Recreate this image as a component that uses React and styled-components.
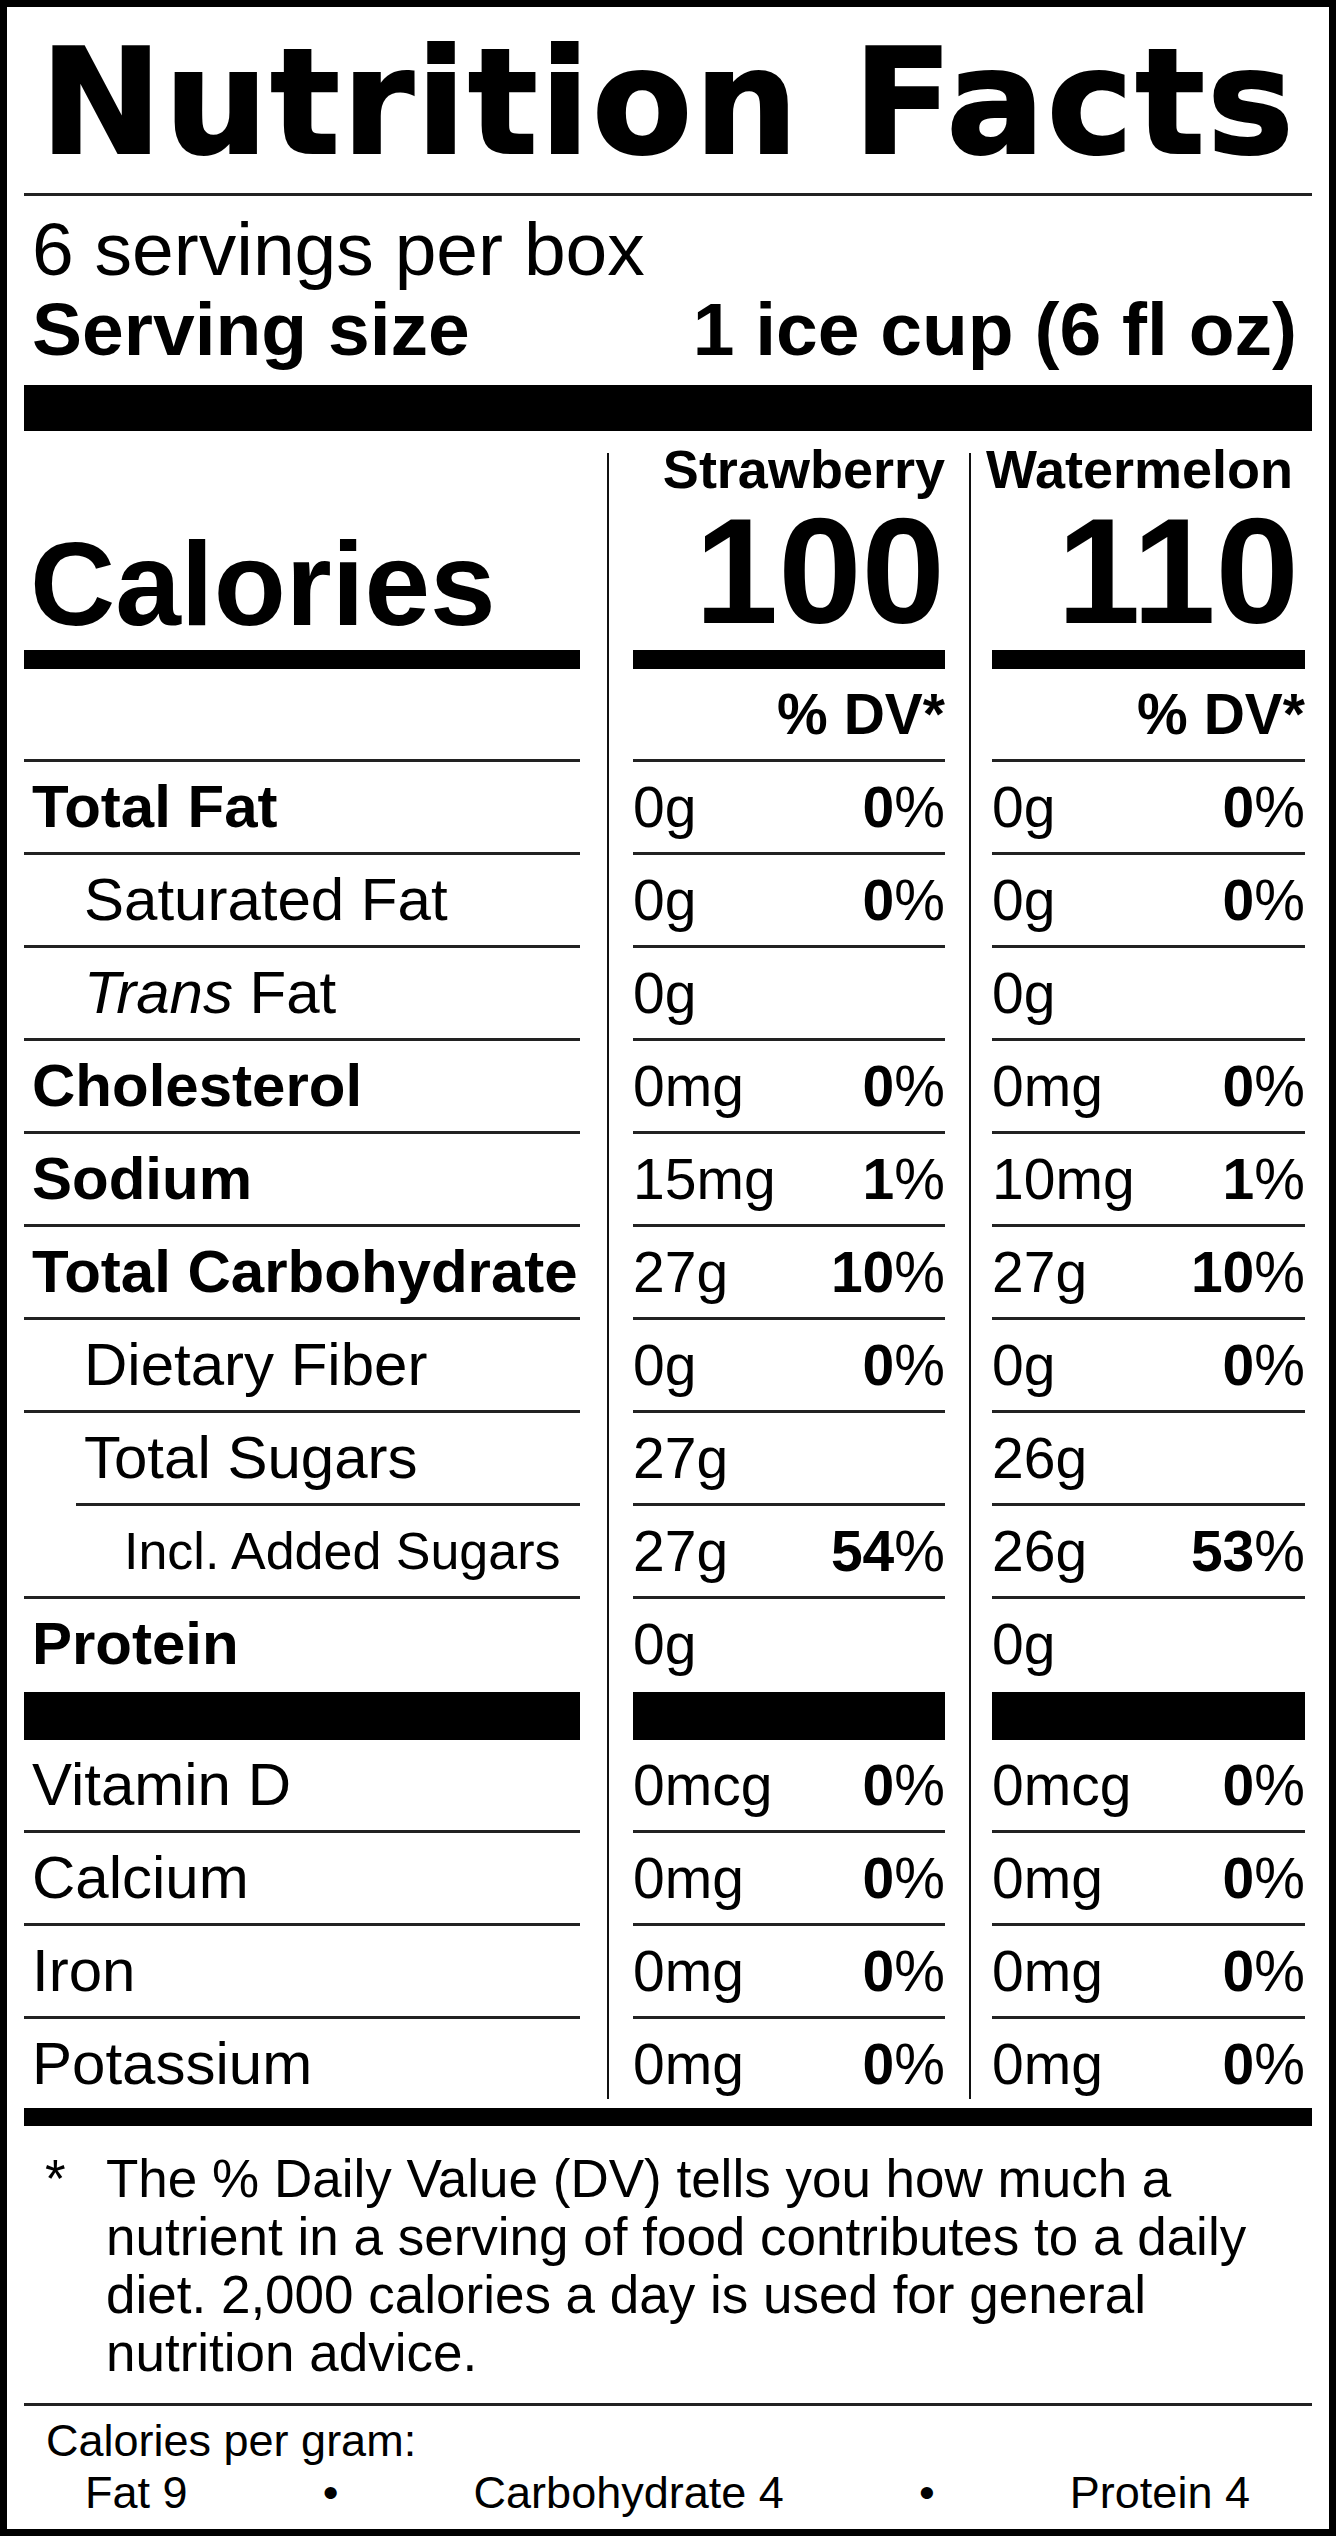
import React, { Fragment } from 'react';
import styled, { createGlobalStyle } from 'styled-components';

const GlobalStyle = createGlobalStyle`
  html, body {
    margin: 0;
    padding: 0;
    background: #fff;
  }
  body {
    font-family: "Liberation Sans", Arial, sans-serif;
    color: #000;
  }
`;

const Label = styled.div`
  box-sizing: border-box;
  width: 1336px;
  height: 2536px;
  border: 7px solid #000;
  padding: 0 17px;
  display: flex;
  flex-direction: column;
  background: #fff;
`;

const Title = styled.h1`
  margin: 0;
  height: 186px;
  line-height: 190px;
  font-family: "DejaVu Sans", "Liberation Sans", sans-serif;
  font-weight: 700;
  font-size: 146px;
  letter-spacing: 2px;
  -webkit-text-stroke: 2px #000;
  text-align: center;
  white-space: nowrap;
`;

const Bar = styled.div`
  flex: none;
  height: ${(p) => p.$h || 3}px;
  margin-top: ${(p) => p.$mt || 0}px;
  margin-left: ${(p) => p.$inset || 0}px;
  background: ${(p) => (p.$thin ? '#222' : '#000')};
`;

const Serving = styled.div`
  padding: 13px 15px 0 8px;
  font-size: 75px;
  line-height: 80px;
  white-space: nowrap;
`;

const ServingSize = styled.div`
  display: flex;
  justify-content: space-between;
  font-weight: 700;
`;

const Columns = styled.div`
  display: flex;
  align-items: stretch;
`;

const Column = styled.div`
  flex: none;
  width: ${(p) => p.$w}px;
  display: flex;
  flex-direction: column;
`;

const Divider = styled.div`
  flex: none;
  width: 2px;
  margin: 22px ${(p) => p.$right}px 0 ${(p) => p.$left}px;
  background: #111;
`;

const Header = styled.div`
  box-sizing: border-box;
  height: 212px;
  padding-top: 8px;
  display: flex;
  flex-direction: column;
  justify-content: flex-end;
  align-items: ${(p) => (p.$left ? 'flex-start' : 'flex-end')};
  font-weight: 700;
  white-space: nowrap;
`;

const ProductName = styled.div`
  font-size: 54px;
  line-height: 60px;
  margin-right: ${(p) => p.$pad || 0}px;
`;

const CalorieCount = styled.div`
  font-size: 150px;
  line-height: 144px;
  margin-right: ${(p) => p.$pad || 0}px;
`;

const CaloriesWord = styled.div`
  font-size: 118px;
  line-height: 118px;
  padding-left: 6px;
`;

const Cell = styled.div`
  flex: none;
  height: ${(p) => p.$h || 90}px;
  line-height: 90px;
  display: flex;
  justify-content: ${(p) => (p.$end ? 'flex-end' : 'space-between')};
  white-space: nowrap;
`;

const NameText = styled.span`
  font-size: ${(p) => (p.$indent === 2 ? 52 : 60)}px;
  font-weight: ${(p) => (p.$bold ? 700 : 400)};
  padding-left: ${(p) => [8, 60, 100][p.$indent || 0]}px;
`;

const ValueText = styled.span`
  font-size: 57px;
  font-weight: ${(p) => (p.$bold ? 700 : 400)};
`;

const Footnote = styled.div`
  display: flex;
  padding-top: 24px;
  font-size: 53px;
  line-height: 58px;
`;

const Star = styled.div`
  flex: none;
  width: 82px;
  box-sizing: border-box;
  padding-left: 21px;
`;

const PerGram = styled.div`
  padding: 9px 0 0 22px;
  font-size: 45px;
  line-height: 52px;
`;

const PerGramRow = styled.div`
  display: flex;
  justify-content: space-between;
  padding: 0 62px 0 39px;
  white-space: nowrap;
`;

const NUTRIENTS = [
  { name: 'Total Fat', bold: true, values: [['0g', '0'], ['0g', '0']] },
  { name: 'Saturated Fat', indent: 1, values: [['0g', '0'], ['0g', '0']] },
  { name: 'Fat', italic: 'Trans', indent: 1, values: [['0g'], ['0g']] },
  { name: 'Cholesterol', bold: true, values: [['0mg', '0'], ['0mg', '0']] },
  { name: 'Sodium', bold: true, values: [['15mg', '1'], ['10mg', '1']] },
  { name: 'Total Carbohydrate', bold: true, values: [['27g', '10'], ['27g', '10']] },
  { name: 'Dietary Fiber', indent: 1, values: [['0g', '0'], ['0g', '0']] },
  { name: 'Total Sugars', indent: 1, ruleInset: 52, values: [['27g'], ['26g']] },
  { name: 'Incl. Added Sugars', indent: 2, values: [['27g', '54'], ['26g', '53']] },
  { name: 'Protein', bold: true, values: [['0g'], ['0g']] },
];

const VITAMINS = [
  { name: 'Vitamin D', values: [['0mcg', '0'], ['0mcg', '0']] },
  { name: 'Calcium', values: [['0mg', '0'], ['0mg', '0']] },
  { name: 'Iron', values: [['0mg', '0'], ['0mg', '0']] },
  { name: 'Potassium', values: [['0mg', '0'], ['0mg', '0']] },
];

const PRODUCTS = [
  { name: 'Strawberry', calories: 100, width: 312, pad: 0 },
  { name: 'Watermelon', calories: 110, width: 313, pad: 12 },
];

const rowHeight = (list, i, lastHeight) => (i === list.length - 1 ? lastHeight : 90);

const Percent = ({ value }) =>
  value === undefined ? null : (
    <ValueText>
      <b>{value}</b>%
    </ValueText>
  );

const NameColumn = () => (
  <Column $w={556}>
    <Header $left>
      <CaloriesWord>Calories</CaloriesWord>
    </Header>
    <Bar $h={19} $mt={7} />
    <Cell />
    <Bar $thin />
    {NUTRIENTS.map((n, i) => (
      <Fragment key={n.name}>
        <Cell $h={rowHeight(NUTRIENTS, i, 93)}>
          <NameText $bold={n.bold} $indent={n.indent}>
            {n.italic && <i>{n.italic} </i>}
            {n.name}
          </NameText>
        </Cell>
        {i < NUTRIENTS.length - 1 && <Bar $thin $inset={n.ruleInset} />}
      </Fragment>
    ))}
    <Bar $h={48} />
    {VITAMINS.map((n, i) => (
      <Fragment key={n.name}>
        <Cell $h={rowHeight(VITAMINS, i, 80)}>
          <NameText $indent={0}>{n.name}</NameText>
        </Cell>
        {i < VITAMINS.length - 1 && <Bar $thin />}
      </Fragment>
    ))}
  </Column>
);

const ValueColumn = ({ product, index }) => (
  <Column $w={product.width}>
    <Header>
      <ProductName $pad={product.pad}>{product.name}</ProductName>
      <CalorieCount $pad={product.pad / 2}>{product.calories}</CalorieCount>
    </Header>
    <Bar $h={19} $mt={7} />
    <Cell $end>
      <ValueText $bold>% DV*</ValueText>
    </Cell>
    <Bar $thin />
    {NUTRIENTS.map((n, i) => (
      <Fragment key={n.name}>
        <Cell $h={rowHeight(NUTRIENTS, i, 93)}>
          <ValueText>{n.values[index][0]}</ValueText>
          <Percent value={n.values[index][1]} />
        </Cell>
        {i < NUTRIENTS.length - 1 && <Bar $thin />}
      </Fragment>
    ))}
    <Bar $h={48} />
    {VITAMINS.map((n, i) => (
      <Fragment key={n.name}>
        <Cell $h={rowHeight(VITAMINS, i, 80)}>
          <ValueText>{n.values[index][0]}</ValueText>
          <Percent value={n.values[index][1]} />
        </Cell>
        {i < VITAMINS.length - 1 && <Bar $thin />}
      </Fragment>
    ))}
  </Column>
);

export default function App() {
  return (
    <>
      <GlobalStyle />
      <Label>
        <Title>Nutrition Facts</Title>
        <Bar $thin />
        <Serving>
          <div>6 servings per box</div>
          <ServingSize>
            <span>Serving size</span>
            <span>1 ice cup (6 fl oz)</span>
          </ServingSize>
        </Serving>
        <Bar $h={46} $mt={16} />
        <Columns>
          <NameColumn />
          <Divider $left={27} $right={24} />
          <ValueColumn product={PRODUCTS[0]} index={0} />
          <Divider $left={24} $right={21} />
          <ValueColumn product={PRODUCTS[1]} index={1} />
        </Columns>
        <Bar $h={18} $mt={9} />
        <Footnote>
          <Star>*</Star>
          <div>
            The % Daily Value (DV) tells you how much a
            <br />
            nutrient in a serving of food contributes to a daily
            <br />
            diet. 2,000 calories a day is used for general
            <br />
            nutrition advice.
          </div>
        </Footnote>
        <Bar $thin $mt={21} />
        <PerGram>
          <div>Calories per gram:</div>
          <PerGramRow>
            <span>Fat 9</span>
            <span>•</span>
            <span>Carbohydrate 4</span>
            <span>•</span>
            <span>Protein 4</span>
          </PerGramRow>
        </PerGram>
      </Label>
    </>
  );
}
